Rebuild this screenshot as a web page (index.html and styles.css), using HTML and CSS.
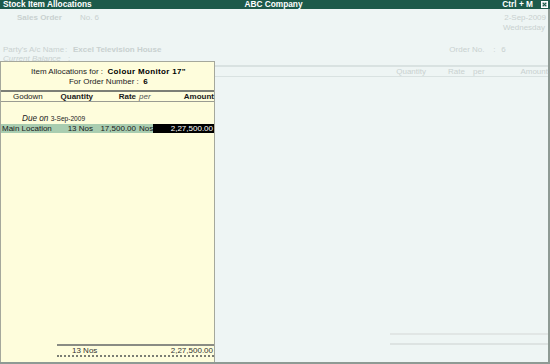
FILE: index.html
```html
<!DOCTYPE html>
<html>
<head>
<meta charset="utf-8">
<link rel="stylesheet" href="styles.css">
</head>
<body>
<div class="app">
  <div class="titlebar">
    <span class="tb-left">Stock Item Allocations</span>
    <span class="tb-center">ABC Company</span>
    <span class="tb-right">Ctrl + M <span class="closebox"><svg width="7" height="7" viewBox="0 0 7 7"><rect x="0.5" y="0.5" width="6" height="6" fill="#d8e4e0" stroke="#ffffff"/><path d="M1.8 1.8 L5.2 5.2 M5.2 1.8 L1.8 5.2" stroke="#1d5a4a" stroke-width="1.2"/></svg></span></span>
  </div>
  <div class="main">
    <div class="bg">
      <div class="bg-row1">
        <span class="b so">Sales Order</span>
        <span class="sono">No. 6</span>
        <span class="date">2-Sep-2009</span>
      </div>
      <div class="bg-day">Wednesday</div>
      <div class="bg-party">
        <span class="lbl">Party's A/c Name</span>
        <span class="colon">:</span>
        <span class="b">Excel Television House</span>
        <span class="ordlbl">Order No.</span>
        <span class="ordcolon">:</span>
        <span class="ordval">6</span>
      </div>
      <div class="bg-bal">
        <span class="lbl i">Current Balance</span>
        <span class="colon">:</span>
      </div>
      <div class="bg-head">
        <span class="h-qty">Quantity</span>
        <span class="h-rate">Rate</span>
        <span class="h-per">per</span>
        <span class="h-amt">Amount</span>
      </div>
      <div class="bg-spacer"></div>
      <div class="bg-totals">
        <div class="tline"></div>
        <div class="tline2"></div>
      </div>
    </div>

    <div class="panel">
      <div class="p-title">
        <div>Item Allocations for : &nbsp;<b>Colour Monitor 17"</b></div>
        <div>For Order Number : &nbsp;<b>6</b></div>
      </div>
      <div class="grid p-head">
        <span class="c1 hc">Godown</span>
        <span class="c2 b">Quantity</span>
        <span class="c3 b">Rate</span>
        <span class="c4 i per">per</span>
        <span class="c5 b">Amount</span>
      </div>
      <div class="due"><span class="i">Due on</span> <span class="small">3-Sep-2009</span></div>
      <div class="grid p-row">
        <span class="c1 sel">Main Location</span>
        <span class="c2 sel">13 Nos</span>
        <span class="c3 sel">17,500.00</span>
        <span class="c4 sel">Nos</span>
        <span class="c5 cur">2,27,500.00</span>
      </div>
      <div class="p-fill"></div>
      <div class="grid p-total">
        <span class="c1"></span>
        <span class="tot-box">
          <span class="tq">13 Nos</span>
          <span class="ta">2,27,500.00</span>
        </span>
      </div>
    </div>
  </div>
</div>
</body>
</html>
```

FILE: styles.css
```css
html, body {
  margin: 0;
  padding: 0;
}
body {
  width: 550px;
  height: 364px;
  overflow: hidden;
  font-family: "Liberation Sans", Arial, sans-serif;
  font-size: 8px;
  color: #1a1a1a;
  background: #eef5f4;
}
.app {
  width: 550px;
  height: 364px;
  box-sizing: border-box;
  border-right: 2px solid #8e9a94;
  border-bottom: 2px solid #8e9a94;
  display: flex;
  flex-direction: column;
}
.titlebar {
  height: 9px;
  flex: none;
  background: #1d5a4a;
  color: #ffffff;
  font-weight: bold;
  font-size: 8.3px;
  line-height: 9px;
  display: grid;
  grid-template-columns: 1fr auto 1fr;
  padding: 0 0 0 3px;
  margin-right: -2px;
}
.tb-center {
  margin-left: -6px;
}
.tb-right {
  justify-self: end;
  display: flex;
  align-items: center;
  gap: 8px;
  padding-right: 2px;
}
.closebox {
  display: flex;
  width: 7px;
  height: 7px;
}
.main {
  flex: 1;
  position: relative;
}
.bg {
  height: 100%;
  display: flex;
  flex-direction: column;
  color: #c9d1d0;
}
.b { font-weight: bold; }
.i { font-style: italic; }
.bg-row1 {
  display: flex;
  padding: 4px 2px 0 17px;
  line-height: 10px;
}
.sono { margin-left: 18px; }
.date { margin-left: auto; }
.bg-day {
  text-align: right;
  line-height: 10px;
  padding-right: 3px;
}
.bg-party {
  display: flex;
  margin-top: 12px;
  padding-left: 3px;
  line-height: 9px;
}
.lbl { width: 62px; }
.colon { width: 8px; }
.ordlbl { margin-left: 288px; width: 44px; }
.ordcolon { width: 8px; }
.bg-bal {
  display: flex;
  padding-left: 3px;
  line-height: 9px;
}
.bg-bal .lbl { width: 65px; }
.bg-head {
  margin-top: 2px;
  margin-left: 214px;
  border-top: 2px solid #d9e2e1;
  border-bottom: 1px solid #d9e2e1;
  height: 9px;
  line-height: 9px;
  display: grid;
  grid-template-columns: 212px 39px 25px 1fr;
  text-align: right;
}
.h-per { text-align: left; padding-left: 8px; }
.bg-spacer { flex: 1; }
.bg-totals {
  margin-left: 390px;
  padding-bottom: 17px;
}
.tline {
  height: 2px;
  background: #e1e6e5;
  margin-bottom: 8px;
}
.tline2 {
  height: 2px;
  background: #dde3e2;
}

.panel {
  position: absolute;
  left: 0;
  top: 52px;
  width: 215px;
  bottom: 0;
  box-sizing: border-box;
  background: #fefddc;
  border: 1px solid #a5a89c;
  border-bottom: none;
  display: flex;
  flex-direction: column;
}
.p-title {
  text-align: center;
  line-height: 10px;
  padding-top: 5px;
  padding-left: 2px;
  color: #222;
}
.p-title b { color: #000; letter-spacing: 0.35px; }
.grid {
  display: grid;
  grid-template-columns: 56px 37px 43px 16px 61px;
}
.grid .c2, .grid .c3, .grid .c5 { text-align: right; }
.c2 { padding-right: 1px; }
.c3 { padding-right: 1px; }
.c4 { padding-left: 2px; }
.per { color: #555; }
.p-head {
  margin-top: 3px;
  border-top: 2px solid #7c7f76;
  border-bottom: 1px solid #9a9c92;
  line-height: 9px;
  height: 9px;
}
.hc { padding-left: 12px; }
.due {
  margin-top: 12px;
  padding-left: 21px;
  line-height: 10px;
}
.due .i { font-size: 8.2px; }
.small { font-size: 6.6px; }
.p-row {
  line-height: 9px;
  height: 9px;
}
.sel {
  background: #a9cdb0;
}
.p-row .c1 { padding-left: 1px; }
.cur {
  background: #000;
  color: #fff;
  padding-right: 1px;
}
.p-fill { flex: 1; }
.p-total {
  margin-bottom: 5px;
}
.tot-box {
  grid-column: 2 / 6;
  display: flex;
  justify-content: space-between;
  border-top: 2px solid #8a8c84;
  border-bottom: 2px dotted #7a7d74;
  line-height: 9px;
  padding: 0 1px 0 15px;
  color: #333;
}
```
